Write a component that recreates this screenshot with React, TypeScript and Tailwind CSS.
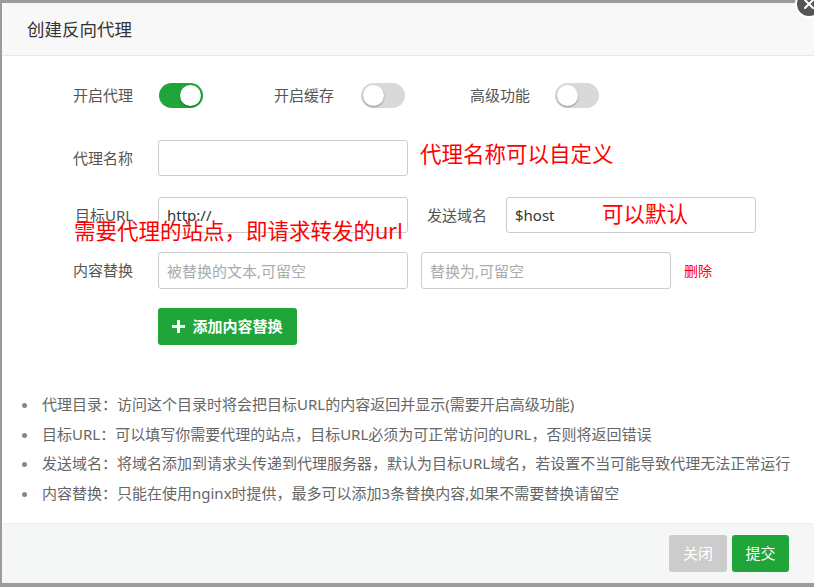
import { X } from 'lucide-react'

const font = { fontFamily: '"Noto Sans", "Noto Sans CJK SC", sans-serif' }

function Toggle({ on }: { on: boolean }) {
  return (
    <div
      className={`relative h-[25px] w-[44px] rounded-full ${
        on ? 'bg-[#20a53a]' : 'bg-[#d9d9d9]'
      }`}
    >
      <span
        className={`absolute top-[2px] h-[21px] w-[21px] rounded-full bg-white shadow-[0_1px_2px_rgba(0,0,0,0.35)] ${
          on ? 'left-[21px]' : 'left-[2px]'
        }`}
      />
    </div>
  )
}

const inputCls =
  'h-[36px] w-[250px] rounded-[3px] border border-[#cccccc] bg-white px-[8px] text-[15px] text-[#333] placeholder:text-[#aaa] outline-none'

export default function App() {
  const tips = [
    '代理目录：访问这个目录时将会把目标URL的内容返回并显示(需要开启高级功能)',
    '目标URL：可以填写你需要代理的站点，目标URL必须为可正常访问的URL，否则将返回错误',
    '发送域名：将域名添加到请求头传递到代理服务器，默认为目标URL域名，若设置不当可能导致代理无法正常运行',
    '内容替换：只能在使用nginx时提供，最多可以添加3条替换内容,如果不需要替换请留空',
  ]

  return (
    <div className="relative h-[587px] w-[814px] overflow-hidden bg-[#9b9b9b] pl-[2px] pt-[3px]" style={font}>
      <div className="relative flex h-[580px] w-[812px] flex-col bg-white">
        {/* Header */}
        <div className="flex h-[53px] items-center border-b border-[#e8e8e8] bg-[#f8f8f8] pl-[25px] text-[17.5px] text-[#333]">
          创建反向代理
        </div>

        {/* Body */}
        <div className="relative flex-1 text-[15px] text-[#555]">
          <div className="mt-[27px] flex items-center pl-[71px]">
            <span className="w-[86px]">开启代理</span>
            <Toggle on />
            <span className="ml-[71px] w-[87px]">开启缓存</span>
            <Toggle on={false} />
            <span className="ml-[65px] w-[85px]">高级功能</span>
            <Toggle on={false} />
          </div>

          <div className="mt-[32px] flex items-center pl-[71px]">
            <span className="w-[85px]">代理名称</span>
            <input className={inputCls} />
          </div>

          <div className="mt-[21px] flex items-center pl-[73px]">
            <span className="w-[83px]">目标URL</span>
            <input className={inputCls} defaultValue="http://" />
            <span className="ml-[19px] w-[79px]">发送域名</span>
            <input className={inputCls} defaultValue="$host" />
          </div>

          <div className="mt-[19px] flex items-center pl-[71px]">
            <span className="w-[85px]">内容替换</span>
            <input className={`${inputCls} h-[37px]`} placeholder="被替换的文本,可留空" />
            <input className={`${inputCls} ml-[13px] h-[37px]`} placeholder="替换为,可留空" />
            <span className="ml-[13px] text-[14px] text-[#ff0000]">删除</span>
          </div>

          <div className="mt-[19px] pl-[156px]">
            <button className="flex h-[37px] w-[139px] items-center justify-center gap-[7px] rounded-[3px] bg-[#20a53a] text-[15px] font-bold text-white">
              <svg width="13" height="13" viewBox="0 0 13 13">
                <path d="M5 0h3v5h5v3H8v5H5V8H0V5h5z" fill="white" />
              </svg>
              添加内容替换
            </button>
          </div>

          <ul className="mt-[45px] pl-[40px] text-[15px] leading-[29.7px] text-[#666]">
            {tips.map((t) => (
              <li key={t} className="relative">
                <span className="absolute left-[-20px] top-[13px] h-[5px] w-[5px] rounded-full bg-[#888]" />
                {t}
              </li>
            ))}
          </ul>

          {/* red annotations */}
          <span className="absolute left-[418px] top-[87px] text-[21.5px] leading-none text-[#ff0000]">
            代理名称可以自定义
          </span>
          <span className="absolute left-[600px] top-[147px] text-[21.5px] leading-none text-[#ff0000]">
            可以默认
          </span>
          <span className="absolute left-[72px] top-[164px] text-[21.5px] leading-none text-[#ff0000]">
            需要代理的站点，即请求转发的url
          </span>
        </div>

        {/* Footer */}
        <div className="flex h-[60px] items-center justify-end gap-[5px] border-t border-[#eeeeee] bg-[#f5f6f6] pr-[25px]">
          <button className="h-[37px] w-[58px] rounded-[3px] bg-[#cccccc] text-[15px] text-white">关闭</button>
          <button className="h-[37px] w-[57px] rounded-[3px] bg-[#20a53a] text-[15px] text-white">提交</button>
        </div>
      </div>

      <div className="absolute left-[795px] top-[-10px] flex h-[28px] w-[28px] items-center justify-center rounded-full border-2 border-white bg-[#555]">
        <X size={16} strokeWidth={3} className="text-white" />
      </div>
    </div>
  )
}
